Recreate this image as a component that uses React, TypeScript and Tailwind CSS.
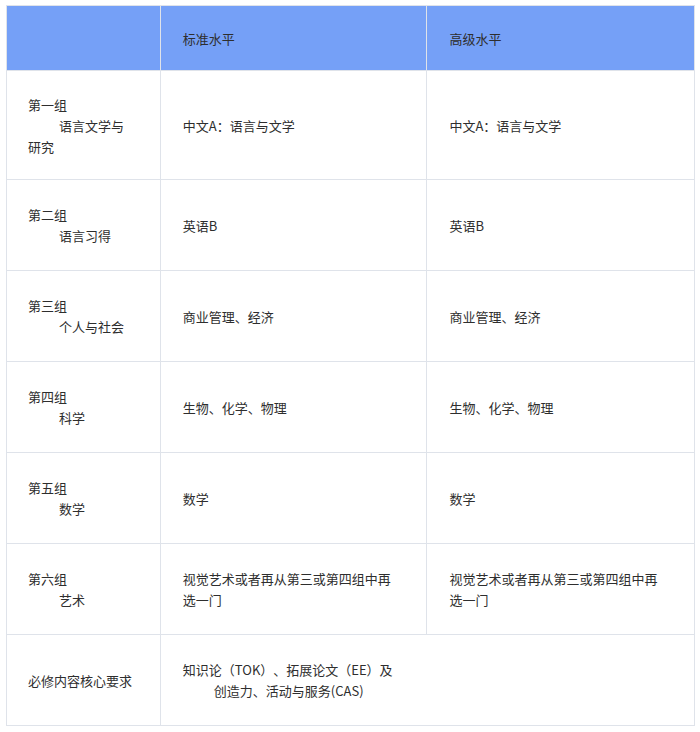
const font = { fontFamily: '"Noto Sans CJK SC", "Noto Sans", sans-serif' };

type Row = {
  group: string;
  subject: string[];
  sl: string[];
  hl: string[];
};

const rows: Row[] = [
  { group: '第一组', subject: ['语言文学与', '研究'], sl: ['中文A：语言与文学'], hl: ['中文A：语言与文学'] },
  { group: '第二组', subject: ['语言习得'], sl: ['英语B'], hl: ['英语B'] },
  { group: '第三组', subject: ['个人与社会'], sl: ['商业管理、经济'], hl: ['商业管理、经济'] },
  { group: '第四组', subject: ['科学'], sl: ['生物、化学、物理'], hl: ['生物、化学、物理'] },
  { group: '第五组', subject: ['数学'], sl: ['数学'], hl: ['数学'] },
  {
    group: '第六组',
    subject: ['艺术'],
    sl: ['视觉艺术或者再从第三或第四组中再', '选一门'],
    hl: ['视觉艺术或者再从第三或第四组中再', '选一门'],
  },
];

function Lines({ lines }: { lines: string[] }) {
  return (
    <>
      {lines.map((l, i) => (
        <div key={i}>{l}</div>
      ))}
    </>
  );
}

export default function App() {
  return (
    <div className="w-[700px] h-[732px] bg-white pt-[5px] pl-[6px]" style={font}>
      <table className="w-[689px] border-collapse text-[13px] leading-[21px] text-[#2e2e2e] [text-spacing-trim:space-all]">
        <colgroup>
          <col className="w-[154px]" />
          <col className="w-[267px]" />
          <col className="w-[268px]" />
        </colgroup>
        <thead>
          <tr className="h-[65px] bg-[#75a0f7]">
            <th className="border border-[#dfe3ea] font-normal text-left px-[21px]"></th>
            <th className="border border-[#dfe3ea] font-normal text-left px-[22px]">标准水平</th>
            <th className="border border-[#dfe3ea] font-normal text-left px-[22px]">高级水平</th>
          </tr>
        </thead>
        <tbody>
          {rows.map((r, i) => (
            <tr key={r.group} className={i === 0 ? 'h-[109px]' : 'h-[91px]'}>
              <td className="border border-[#dfe3ea] align-middle pl-[21px] pr-[10px]">
                <div>{r.group}</div>
                {r.subject.map((s, j) => (
                  <div key={j} className={j === 0 ? 'pl-[31px]' : ''}>
                    {s}
                  </div>
                ))}
              </td>
              <td className="border border-[#dfe3ea] align-middle pl-[22px] pr-[10px]">
                <Lines lines={r.sl} />
              </td>
              <td className="border border-[#dfe3ea] align-middle pl-[22px] pr-[10px]">
                <Lines lines={r.hl} />
              </td>
            </tr>
          ))}
          <tr className="h-[91px]">
            <td className="border border-[#dfe3ea] align-middle pl-[21px]">必修内容核心要求</td>
            <td colSpan={2} className="border border-[#dfe3ea] align-middle pl-[22px]">
              <div>知识论（TOK）、拓展论文（EE）及</div>
              <div className="pl-[31px]">创造力、活动与服务(CAS)</div>
            </td>
          </tr>
        </tbody>
      </table>
    </div>
  );
}
